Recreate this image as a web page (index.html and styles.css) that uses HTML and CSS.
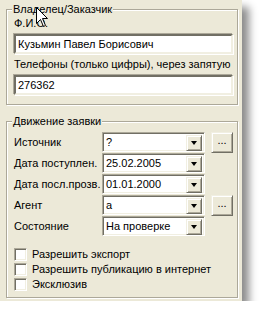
FILE: index.html
```html
<!DOCTYPE html>
<html lang="ru">
<head>
<meta charset="utf-8">
<title>Заявка</title>
<link rel="stylesheet" href="styles.css">
</head>
<body>
<div class="panel">
  <div class="group g1">
    <span class="legend">Владелец/Заказчик</span>
    <div class="lbl">Ф.И.О.</div>
    <div class="edit">Кузьмин Павел Борисович</div>
    <div class="lbl lbl2">Телефоны (только цифры), через запятую</div>
    <div class="edit">276362</div>
  </div>
  <div class="group g2">
    <span class="legend">Движение заявки</span>
    <div class="grid">
      <div class="rl">Источник</div>
      <div class="combo"><span class="val">?</span><span class="ddb"><i class="arr"></i></span></div>
      <div class="btn">...</div>

      <div class="rl">Дата поступлен.</div>
      <div class="combo"><span class="val">25.02.2005</span><span class="ddb"><i class="arr"></i></span></div>
      <div></div>

      <div class="rl">Дата посл.прозв.</div>
      <div class="combo"><span class="val">01.01.2000</span><span class="ddb"><i class="arr"></i></span></div>
      <div></div>

      <div class="rl">Агент</div>
      <div class="combo"><span class="val">а</span><span class="ddb"><i class="arr"></i></span></div>
      <div class="btn">...</div>

      <div class="rl">Состояние</div>
      <div class="combo"><span class="val">На проверке</span><span class="ddb"><i class="arr"></i></span></div>
      <div></div>
    </div>
    <div class="checks">
      <div class="chk"><span class="box"></span>Разрешить экспорт</div>
      <div class="chk"><span class="box"></span>Разрешить публикацию в интернет</div>
      <div class="chk"><span class="box"></span>Эксклюзив</div>
    </div>
  </div>
  <svg class="cursor" width="13" height="21" viewBox="0 0 13 21">
    <path d="M0.5 0.5 L0.5 16.5 L4.5 12.5 L7.5 19.5 L9.5 18.5 L6.5 11.5 L11.5 11.5 Z" fill="#fff" stroke="#000" stroke-width="1"/>
  </svg>
</div>
</body>
</html>
```

FILE: styles.css
```css
* { box-sizing: border-box; }
html, body { margin: 0; padding: 0; background: #fff; }
body {
  font-family: "Liberation Sans", Arial, sans-serif;
  font-size: 11px;
  line-height: 13px;
  color: #000;
}
.panel {
  position: relative;
  width: 242px;
  height: 301px;
  background: #ECE9D8;
  padding: 9px 0 0 6px;
  box-shadow: 7px 7px 8px rgba(0,0,0,0.45);
}
.group {
  position: relative;
  width: 232px;
  border: 1px solid #ACA899;
  box-shadow: inset 1px 1px #fff, 1px 1px #fff;
}
.legend {
  position: absolute;
  top: -7px;
  left: 5px;
  padding: 0 1px;
  background: #ECE9D8;
  white-space: nowrap;
}
.g1 {
  height: 96px;
  padding: 7px 4px 0 7px;
}
.lbl { height: 13px; }
.lbl2 { margin-top: 4px; }
.edit {
  margin-top: 4px;
  height: 20px;
  background: #fff;
  border-style: solid;
  border-width: 2px;
  border-color: #716F64 #F1EFE2 #F1EFE2 #716F64;
  box-shadow: -1px -1px #ACA899, 1px 1px #fff;
  padding: 2px 0 0 2px;
  white-space: nowrap;
  overflow: hidden;
}
.g2 {
  margin-top: 16px;
  height: 177px;
  padding: 10px 0 0 7px;
}
.grid {
  display: grid;
  grid-template-columns: 88px 103px 22px;
  column-gap: 0;
  grid-auto-rows: 21px;
}
.rl {
  display: flex;
  align-items: center;
  white-space: nowrap;
}
.combo {
  position: relative;
  height: 20px;
  display: flex;
  background: #fff;
  border-style: solid;
  border-width: 1px;
  border-color: #ACA899 #fff #fff #ACA899;
  box-shadow: inset 1px 1px #716F64, inset -1px -1px #F1EFE2;
  padding: 2px 2px 2px 2px;
}
.val { flex: 1; padding: 1px 0 0 1px; white-space: nowrap; overflow: hidden; }
.ddb {
  width: 16px;
  height: 16px;
  background: #ECE9D8;
  border-style: solid;
  border-width: 1px;
  border-color: #F1EFE2 #716F64 #716F64 #F1EFE2;
  box-shadow: inset 1px 1px #fff, inset -1px -1px #ACA899;
  display: flex;
  align-items: center;
  justify-content: center;
}
.arr {
  width: 0; height: 0;
  border-left: 3.5px solid transparent;
  border-right: 3.5px solid transparent;
  border-top: 4px solid #000;
}
.btn {
  margin-left: 6px;
  width: 22px;
  height: 21px;
  background: #ECE9D8;
  border-style: solid;
  border-width: 1px;
  border-color: #F1EFE2 #716F64 #716F64 #F1EFE2;
  box-shadow: inset 1px 1px #fff, inset -1px -1px #ACA899;
  text-align: center;
  line-height: 15px;
}
.checks { margin-top: 10px; }
.chk {
  display: flex;
  align-items: center;
  height: 15px;
  white-space: nowrap;
}
.box {
  width: 13px;
  height: 13px;
  margin-right: 5px;
  background: #fff;
  border-style: solid;
  border-width: 1px;
  border-color: #ACA899 #fff #fff #ACA899;
  box-shadow: inset 1px 1px #716F64, inset -1px -1px #F1EFE2;
}
.cursor {
  position: absolute;
  left: 36px;
  top: 7px;
}
```
